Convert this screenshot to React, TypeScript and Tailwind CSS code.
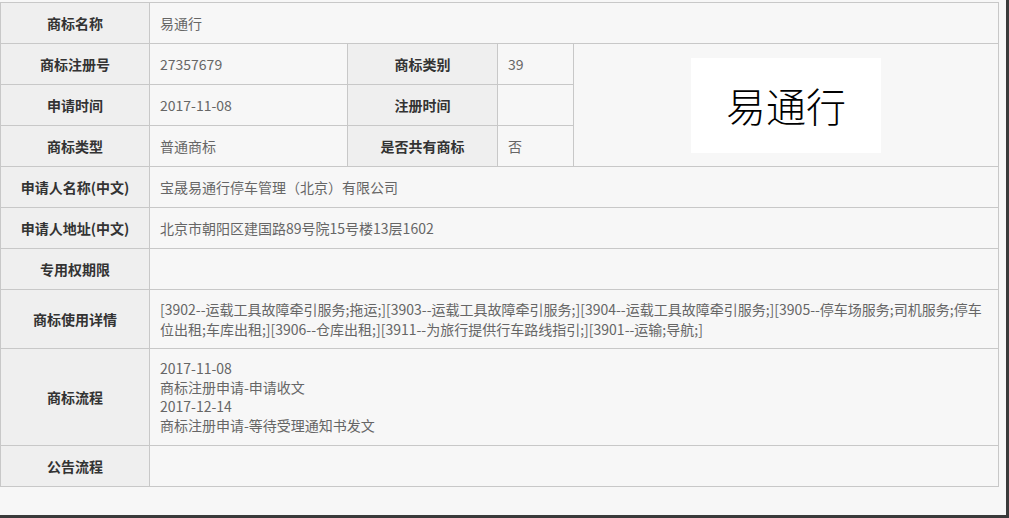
export default function App() {
  const L = "bg-[#efefef] border border-[#c8c8c8] text-center font-bold text-[#333] text-[14px]";
  const V = "border border-[#c8c8c8] text-[#666] text-[14px] px-[10px]";
  return (
    <div className="w-[1009px] h-[518px] bg-[#3a3a3a] flex flex-col" style={{ fontFamily: '"Noto Sans CJK SC", "Noto Sans", sans-serif' }}>
      <div className="flex flex-1 min-h-0">
        <div className="w-[1006px] bg-[#f7f7f7] pt-[2px]">
          <table className="border-collapse w-[999px] table-fixed">
            <colgroup>
              <col className="w-[149px]" /><col className="w-[198px]" /><col className="w-[150px]" /><col className="w-[76px]" /><col />
            </colgroup>
            <tbody>
              <tr className="h-[41px]"><td className={L}>商标名称</td><td className={V} colSpan={4}>易通行</td></tr>
              <tr className="h-[41px]"><td className={L}>商标注册号</td><td className={V}>27357679</td><td className={L}>商标类别</td><td className={V}>39</td>
                <td className="border border-[#c8c8c8]" rowSpan={3}>
                  <div className="flex justify-center"><div className="w-[190px] h-[95px] bg-white flex items-center justify-center text-[40px] text-black" style={{ fontFamily: '"Noto Sans CJK SC", sans-serif', fontWeight: 300 }}>易通行</div></div>
                </td></tr>
              <tr className="h-[41px]"><td className={L}>申请时间</td><td className={V}>2017-11-08</td><td className={L}>注册时间</td><td className={V}></td></tr>
              <tr className="h-[41px]"><td className={L}>商标类型</td><td className={V}>普通商标</td><td className={L}>是否共有商标</td><td className={V}>否</td></tr>
              <tr className="h-[41px]"><td className={L}>申请人名称(中文)</td><td className={V} colSpan={4}>宝晟易通行停车管理（北京）有限公司</td></tr>
              <tr className="h-[41px]"><td className={L}>申请人地址(中文)</td><td className={V} colSpan={4}>北京市朝阳区建国路89号院15号楼13层1602</td></tr>
              <tr className="h-[41px]"><td className={L}>专用权期限</td><td className={V} colSpan={4}></td></tr>
              <tr className="h-[59px]"><td className={L}>商标使用详情</td><td className={V + " leading-[20px]"} colSpan={4}>[3902--运载工具故障牵引服务;拖运;][3903--运载工具故障牵引服务;][3904--运载工具故障牵引服务;][3905--停车场服务;司机服务;停车位出租;车库出租;][3906--仓库出租;][3911--为旅行提供行车路线指引;][3901--运输;导航;]</td></tr>
              <tr className="h-[97px]"><td className={L}>商标流程</td><td className={V + " leading-[19px]"} colSpan={4}>2017-11-08<br />商标注册申请-申请收文<br />2017-12-14<br />商标注册申请-等待受理通知书发文</td></tr>
              <tr className="h-[41px]"><td className={L}>公告流程</td><td className={V} colSpan={4}></td></tr>
            </tbody>
          </table>
        </div>
      </div>
      <div className="h-[3px]" />
    </div>
  );
}
